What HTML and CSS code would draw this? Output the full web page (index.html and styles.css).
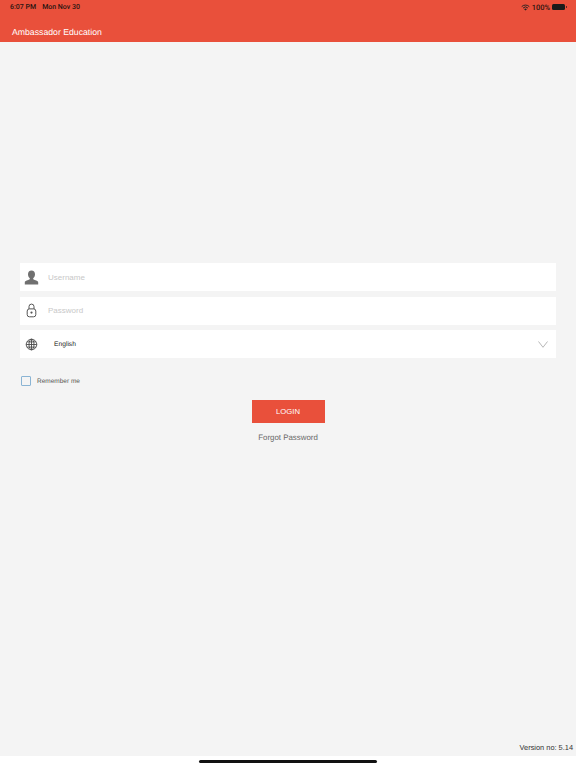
FILE: index.html
```html
<!DOCTYPE html>
<html lang="en">
<head>
    <meta charset="UTF-8">
    <title>Ambassador Education</title>
    <link rel="stylesheet" href="styles.css">
</head>
<body>
    <div class="header">
        <div class="statusBar">
            <span class="clock">6:07 PM</span>
            <span class="date">Mon Nov 30</span>
            <span class="statusRight">
                <svg class="wifi" viewBox="0 0 16 12">
                    <path d="M8 11.5 L5.6 8.9 A3.4 3.4 0 0 1 10.4 8.9 Z" fill="#222"/>
                    <path d="M3.7 6.9 A6.2 6.2 0 0 1 12.3 6.9" fill="none" stroke="#222" stroke-width="1.7"/>
                    <path d="M1.3 4.4 A9.6 9.6 0 0 1 14.7 4.4" fill="none" stroke="#222" stroke-width="1.7"/>
                </svg>
                <span>100%</span>
                <span class="battery"></span>
                <span class="batteryNub"></span>
            </span>
        </div>
        <div class="title">Ambassador Education</div>
    </div>

    <div class="content">
        <form class="loginForm">
            <div class="field">
                <svg class="fieldIcon" viewBox="0 0 15 15">
                    <path d="M7.5 0.5 C5.3 0.5 4 2 4 4.2 C4 6 4.8 7.4 5.8 8.3 V9.2 C4.2 10.2 0.8 10.6 0.8 12.4 V14.5 H14.2 V12.4 C14.2 10.6 10.8 10.2 9.2 9.2 V8.3 C10.2 7.4 11 6 11 4.2 C11 2 9.7 0.5 7.5 0.5 Z" fill="#707070"/>
                </svg>
                <input class="textInput" type="text" placeholder="Username">
            </div>
            <div class="field">
                <svg class="fieldIcon" viewBox="0 0 15 15">
                    <path d="M5 6 V3.6 A2.5 2.5 0 0 1 10 3.6 V6" fill="none" stroke="#555" stroke-width="1"/>
                    <rect x="3.2" y="5.9" width="8.6" height="7.9" rx="2.2" fill="none" stroke="#555" stroke-width="1"/>
                    <circle cx="7.5" cy="9.6" r="1.1" fill="#555"/>
                </svg>
                <input class="textInput" type="password" placeholder="Password">
            </div>
            <div class="field">
                <svg class="fieldIcon" viewBox="0 0 15 15">
                    <g fill="none" stroke="#4a4a4a" stroke-width="0.9">
                        <circle cx="7.5" cy="7.5" r="5.3"/>
                        <ellipse cx="7.5" cy="7.5" rx="2.5" ry="5.3"/>
                        <path d="M7.5 2.2 V12.8 M2.2 7.5 H12.8 M3 4.9 H12 M3 10.1 H12"/>
                    </g>
                </svg>
                <span class="language">English</span>
                <svg class="chevron" viewBox="0 0 10 7">
                    <path d="M0.5 0.5 L5 6.3 L9.5 0.5" fill="none" stroke="#b8b8b8" stroke-width="1"/>
                </svg>
            </div>
            <label class="remember">
                <span class="checkbox"></span>
                <span class="rememberText">Remember me</span>
            </label>
            <button class="loginBtn" type="button">LOGIN</button>
            <a class="forgot">Forgot Password</a>
        </form>
        <div class="version">Version no: 5.14</div>
    </div>

    <div class="homeStrip"><div class="homeBar"></div></div>
</body>
</html>
```

FILE: styles.css
```css
* {
    box-sizing: border-box;
}

html, body {
    height: 100%;
}

body {
    margin: 0;
    display: flex;
    flex-direction: column;
    font-family: "Liberation Sans", Arial, sans-serif;
    text-rendering: geometricPrecision;
    background-color: #f4f4f4;
    overflow: hidden;
}

.header {
    height: 42px;
    padding: 0 9px 0 10px;
    background-color: #e9503b;
}

.statusBar {
    display: flex;
    align-items: center;
    height: 14px;
    font-family: Roboto, sans-serif;
    font-size: 7px;
    font-weight: 500;
    color: #2b1512;
}

.clock {
    margin-right: 6px;
}

.statusRight {
    display: flex;
    align-items: center;
    gap: 2px;
    margin-left: auto;
    font-size: 7.5px;
}

.wifi {
    width: 9px;
    height: 7px;
}

.battery {
    width: 13px;
    height: 6px;
    border-radius: 1.5px;
    background-color: #1a1a1a;
}

.batteryNub {
    width: 1px;
    height: 2px;
    margin-left: -1px;
    background-color: #5c2a22;
}

.title {
    margin: 11px 0 0 2px;
    font-size: 8.7px;
    line-height: 14px;
    color: #fff;
}

.content {
    flex: 1;
    display: flex;
    flex-direction: column;
    padding: 221px 3px 2px 20px;
}

.loginForm {
    display: flex;
    flex-direction: column;
    width: 536px;
}

.field {
    display: flex;
    align-items: center;
    height: 28px;
    margin-bottom: 5.5px;
    padding: 0 8px 0 4px;
    background-color: #fff;
}

.fieldIcon {
    flex: none;
    width: 15px;
    height: 15px;
}

.textInput {
    flex: 1;
    margin-left: 9px;
    padding: 0;
    border: none;
    outline: none;
    font-family: inherit;
    font-size: 8px;
    background: none;
}

.textInput::placeholder {
    color: #c8c8c8;
}

.language {
    margin-left: 15px;
    font-size: 6.7px;
    color: #222;
}

.chevron {
    width: 10px;
    height: 7px;
    margin-left: auto;
}

.remember {
    display: flex;
    align-items: center;
    gap: 6px;
    margin: 12px 0 0 1px;
    font-size: 6.5px;
    line-height: 10px;
    color: #555;
}

.rememberText {
    padding-top: 1px;
}

.checkbox {
    width: 10px;
    height: 10px;
    border: 1px solid #8ab4d4;
    border-radius: 1px;
}

.loginBtn {
    align-self: center;
    width: 73px;
    height: 23px;
    margin-top: 13px;
    border: none;
    font-family: inherit;
    font-size: 7.7px;
    color: #fff;
    background-color: #e9503b;
}

.forgot {
    align-self: center;
    margin-top: 9px;
    font-size: 7.9px;
    line-height: 12px;
    color: #6a6a6a;
}

.version {
    margin-top: auto;
    text-align: right;
    font-size: 7.4px;
    line-height: 12px;
    color: #333;
}

.homeStrip {
    height: 12px;
    padding-top: 4px;
    background-color: #fff;
}

.homeBar {
    width: 178px;
    height: 3px;
    margin: 0 auto;
    border-radius: 2px;
    background-color: #111;
}
```
